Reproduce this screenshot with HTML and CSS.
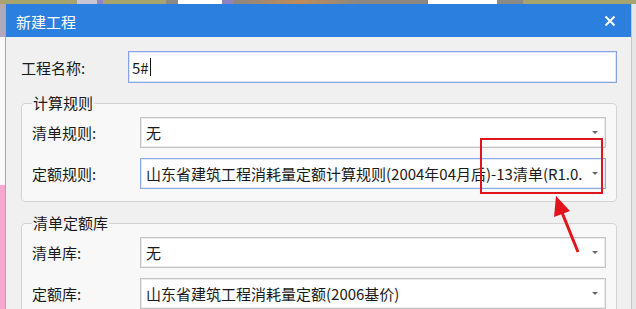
FILE: index.html
```html
<!DOCTYPE html>
<html lang="zh-CN">
<head>
  <meta charset="UTF-8">
  <title>新建工程</title>
  <link rel="stylesheet" href="styles.css">
</head>
<body>
  <!-- desktop showing behind the dialog -->
  <div class="top-strip"></div>
  <div class="desk">
    <div class="side-left"></div>

    <div class="dialog">
      <div class="titlebar">
        <span class="title">新建工程</span>
        <svg class="close" width="12" height="12" viewBox="0 0 12 12">
          <path d="M1.5 1.5 L10.5 10.5 M10.5 1.5 L1.5 10.5" stroke="#fff" stroke-width="2"/>
        </svg>
      </div>

      <div class="dialog-body">
        <div class="row name-row">
          <label class="name-label">工程名称:</label>
          <div class="input">5#<span class="caret"></span></div>
        </div>

        <fieldset class="group">
          <legend>计算规则</legend>
          <div class="row">
            <label>清单规则:</label>
            <div class="combo"><span class="value">无</span><span class="arrow"></span></div>
          </div>
          <div class="row">
            <label>定额规则:</label>
            <div class="combo active"><span class="value">山东省建筑工程消耗量定额计算规则(2004年04月后)-13清单(R1.0.</span><span class="arrow"></span></div>
          </div>
        </fieldset>

        <fieldset class="group">
          <legend>清单定额库</legend>
          <div class="row">
            <label>清单库:</label>
            <div class="combo"><span class="value">无</span><span class="arrow"></span></div>
          </div>
          <div class="row">
            <label>定额库:</label>
            <div class="combo"><span class="value">山东省建筑工程消耗量定额(2006基价)</span><span class="arrow"></span></div>
          </div>
        </fieldset>
      </div>
    </div>

    <div class="side-right"></div>
  </div>

  <!-- red markup drawn over the screenshot -->
  <svg class="annot" width="636" height="309" viewBox="0 0 636 309">
    <rect x="481" y="139" width="121" height="54" fill="none" stroke="#e3131b" stroke-width="2"/>
    <line x1="578" y1="252" x2="561" y2="210" stroke="#e3131b" stroke-width="3"/>
    <polygon points="556,196 570,211 554,217" fill="#e3131b"/>
  </svg>
</body>
</html>
```

FILE: styles.css
```css
body {
  margin: 0;
  width: 636px;
  height: 309px;
  overflow: hidden;
  position: relative;
  font-family: "Noto Sans CJK SC", "Noto Sans", sans-serif;
  font-size: 15px;
  color: #1a1a1a;
  background: #f0f0f0;
}

.top-strip {
  height: 4px;
  background: linear-gradient(to right,
    #a9a46f 0, #a9a46f 77px,
    #c9c4d6 77px, #c9c4d6 97px,
    #8f86c9 97px, #8f86c9 103px,
    #a9a46f 103px, #a9a46f 166px,
    #8a8a86 166px, #8a8a86 178px,
    #ffffff 178px, #ffffff 222px,
    #8d84c4 222px, #8d84c4 233px,
    #8c8780 233px, #c08c5a 300px, #8c8780 360px, #8c8780 428px,
    #ffffff 428px, #ffffff 497px,
    #8a8a86 497px, #8a8a86 523px,
    #a9a46f 523px, #a9a46f 636px);
}

.desk {
  display: flex;
  height: 305px;
}

.side-left {
  width: 5px;
  background: linear-gradient(to bottom, #b0aab8 0, #b0aab8 33px, #fafafa 33px, #fafafa 181px, #f6a9cf 181px);
}

.side-right {
  width: 4px;
  border-left: 1px solid #c6c6c6;
  background: #e6e6e6;
}

.dialog {
  width: 626px;
  border-left: 1px solid #a8a8a8;
  background: #f0f0f0;
}

.titlebar {
  height: 33px;
  background: #2b7fdf;
  display: flex;
  align-items: center;
  justify-content: space-between;
  padding: 0 15px 0 10px;
  color: #fff;
}

.title {
  font-size: 15px;
  padding-top: 1px;
}

.close {
  margin-top: 1px;
}

.dialog-body {
  padding: 14px 14px 0 15px;
}

.row {
  display: flex;
  align-items: center;
}

.row label {
  width: 108px;
  flex: none;
}

.name-row label {
  width: 107px;
}

.input {
  flex: 1;
  height: 30px;
  border: 1px solid #86a3e4;
  background: #fff;
  display: flex;
  align-items: center;
  padding-left: 3px;
  box-shadow: inset 0 0 0 1px #dde6f8;
}

.caret {
  width: 1px;
  height: 18px;
  background: #111;
  margin-left: 1px;
}

.group {
  margin: 12px 0 0 0;
  padding: 6px 10px 12px 10px;
  border: 1px solid #d3d3d3;
  border-radius: 4px;
  background: #f8f8f8;
  min-width: 0;
}

.group + .group {
  margin-top: 13px;
}

.group legend {
  padding: 0 1px;
  line-height: 16px;
  font-size: 15px;
}

.group .row + .row {
  margin-top: 10px;
}

.combo {
  flex: 1;
  min-width: 0;
  height: 29px;
  border: 1px solid #c4c4c4;
  box-shadow: inset 0 0 0 1px #ebebeb;
  background: #fff;
  display: flex;
  align-items: center;
  padding: 0 7px 0 5px;
}

.combo.active {
  border-color: #8aaae6;
  box-shadow: inset 0 0 0 1px #e2eafa;
}

.value {
  flex: 1;
  white-space: nowrap;
  overflow: hidden;
}

.arrow {
  flex: none;
  width: 0;
  height: 0;
  margin-left: 6px;
  border-left: 3px solid transparent;
  border-right: 3px solid transparent;
  border-top: 3px solid #666;
}

.annot {
  position: absolute;
  top: 0;
  left: 0;
  pointer-events: none;
}
```
